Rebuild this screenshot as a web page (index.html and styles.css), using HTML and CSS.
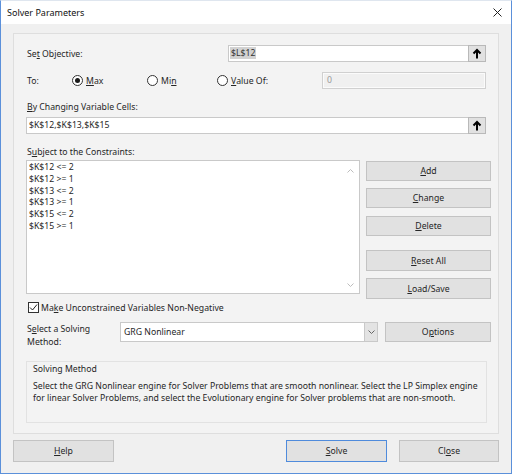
FILE: index.html
```html
<!DOCTYPE html>
<html lang="en">

<head>
  <meta charset="UTF-8" />
  <meta name="viewport" content="width=device-width, initial-scale=1.0" />
  <title>Solver Parameters</title>
  <link rel="stylesheet" href="styles.css">
</head>

<body>
  <div class="window">
    <div class="titlebar">
      <span class="caption">Solver Parameters</span>
      <svg class="close" width="9" height="9" viewBox="0 0 9 9">
        <path d="M0.5 0.5L8.5 8.5M8.5 0.5L0.5 8.5" stroke="#222" stroke-width="1" />
      </svg>
    </div>

    <div class="content">
      <div class="panel">
        <div class="objective">
          <span class="label">Se<u>t</u> Objective:</span>
          <div class="field">
            <span class="value"><span class="selected">$L$12</span></span>
            <span class="pick">
              <svg width="10" height="11" viewBox="0 0 10 11">
                <path d="M5 10.5V2M1.5 5.5L5 2L8.5 5.5" stroke="#000" stroke-width="2" fill="none" />
              </svg>
            </span>
          </div>
        </div>

        <div class="to-row">
          <span class="label">To:</span>
          <span class="radio"><i class="dot checked"></i><u>M</u>ax</span>
          <span class="radio"><i class="dot"></i>Mi<u>n</u></span>
          <span class="radio"><i class="dot"></i><u>V</u>alue Of:</span>
          <div class="field disabled"><span class="value">0</span></div>
        </div>

        <div class="caption-label"><u>B</u>y Changing Variable Cells:</div>
        <div class="field wide">
          <span class="value">$K$12,$K$13,$K$15</span>
          <span class="pick">
            <svg width="10" height="11" viewBox="0 0 10 11">
              <path d="M5 10.5V2M1.5 5.5L5 2L8.5 5.5" stroke="#000" stroke-width="2" fill="none" />
            </svg>
          </span>
        </div>

        <div class="caption-label">S<u>u</u>bject to the Constraints:</div>
        <div class="constraints">
          <div class="listbox">
            <div class="items">
              <div>$K$12 &lt;= 2</div>
              <div>$K$12 &gt;= 1</div>
              <div>$K$13 &lt;= 2</div>
              <div>$K$13 &gt;= 1</div>
              <div>$K$15 &lt;= 2</div>
              <div>$K$15 &gt;= 1</div>
            </div>
            <div class="scroll">
              <svg width="7" height="4" viewBox="0 0 7 4"><path d="M0.5 3.5L3.5 0.5L6.5 3.5" stroke="#bdbdbd" fill="none" /></svg>
              <svg width="7" height="4" viewBox="0 0 7 4"><path d="M0.5 0.5L3.5 3.5L6.5 0.5" stroke="#bdbdbd" fill="none" /></svg>
            </div>
          </div>
          <div class="side">
            <div class="btn add"><u>A</u>dd</div>
            <div class="btn change"><u>C</u>hange</div>
            <div class="btn delete"><u>D</u>elete</div>
            <div class="btn reset"><u>R</u>eset All</div>
            <div class="btn load"><u>L</u>oad/Save</div>
          </div>
        </div>

        <div class="check-row">
          <span class="checkbox">
            <svg width="9" height="9" viewBox="0 0 9 9"><path d="M1 4.5L3.5 7L8 1.5" stroke="#222" fill="none" /></svg>
          </span>
          <span>Ma<u>k</u>e Unconstrained Variables Non-Negative</span>
        </div>

        <div class="method-row">
          <span class="method-label">S<u>e</u>lect a Solving<br>Method:</span>
          <div class="dropdown">
            <span class="value">GRG Nonlinear</span>
            <span class="drop">
              <svg width="7" height="4" viewBox="0 0 7 4"><path d="M0.5 0.5L3.5 3.5L6.5 0.5" stroke="#666" fill="none" /></svg>
            </span>
          </div>
          <div class="btn options">O<u>p</u>tions</div>
        </div>

        <div class="group">
          <div class="group-title">Solving Method</div>
          <p class="desc">Select the GRG Nonlinear engine for Solver Problems that are smooth nonlinear. Select the LP Simplex engine for linear Solver Problems, and select the Evolutionary engine for Solver problems that are non-smooth.</p>
        </div>
      </div>

      <div class="footer">
        <div class="btn"><u>H</u>elp</div>
        <div class="spacer"></div>
        <div class="btn default"><u>S</u>olve</div>
        <div class="btn close-btn">Cl<u>o</u>se</div>
      </div>
    </div>
  </div>
</body>

</html>
```

FILE: styles.css
```css
* {
  box-sizing: border-box;
}

body {
  margin: 0;
  font-family: "Noto Sans", sans-serif;
  font-size: 8.7px;
  color: #262626;
  background: #fff;
}

u {
  text-decoration-thickness: 0.5px;
  text-underline-offset: 1px;
}

.window {
  width: 512px;
  height: 474px;
  border: 1px solid #5b90da;
  border-top-color: #dfe6ef;
  background: #f0f0f0;
  display: flex;
  flex-direction: column;
}

.titlebar {
  height: 23px;
  flex: none;
  background: #fff;
  display: flex;
  align-items: center;
  justify-content: space-between;
  padding: 0 9px 0 6px;
}

.titlebar .caption {
  font-size: 9px;
  color: #111;
}

.content {
  padding: 9px 12px 0 12px;
}

.panel {
  height: 401px;
  border: 1px solid #dedede;
  background: #f3f3f3;
  padding: 11px 6px 0 12px;
}

.label {
  padding-left: 1px;
}

/* text fields */
.field {
  height: 17px;
  display: flex;
  align-items: stretch;
  background: #fff;
  border: 1px solid #c9c9c9;
}

.field .value {
  flex: 1;
  line-height: 15px;
  padding-left: 1px;
}

.field .selected {
  background: #d2d2d2;
  padding: 0 1px;
  color: #333;
}

.field .pick {
  width: 18px;
  margin: -1px -1px -1px 0;
  background: #e1e1e1;
  border: 1px solid #b9b9b9;
  display: flex;
  align-items: center;
  justify-content: center;
}

.field.disabled {
  background: #f0f0f0;
  border-color: #d0d0d0;
  box-shadow: inset 0 0 0 1px #fbfbfb;
  color: #9a9a9a;
}

.field.disabled .value {
  padding-left: 4px;
}

.field.wide {
  width: 460px;
  margin-top: 4px;
}

.field.wide .value {
  padding-left: 2px;
}

.objective {
  display: grid;
  grid-template-columns: 202px 258px;
  align-items: center;
}

.to-row {
  margin-top: 10px;
  display: grid;
  grid-template-columns: 46px 75px 70px 105px 164px;
  align-items: center;
}

.radio {
  display: flex;
  align-items: center;
}

.dot {
  width: 11px;
  height: 11px;
  border: 1px solid #333;
  border-radius: 50%;
  background: #fff;
  margin-right: 3px;
  display: flex;
  align-items: center;
  justify-content: center;
}

.dot.checked::after {
  content: '';
  width: 5px;
  height: 5px;
  border-radius: 50%;
  background: #1a1a1a;
}

.caption-label {
  margin-top: 12px;
  line-height: 12px;
  padding-left: 1px;
}

/* constraints */
.constraints {
  margin-top: 2px;
  display: flex;
  align-items: flex-start;
}

.listbox {
  width: 334px;
  height: 134px;
  background: #fff;
  border: 1px solid #c9c9c9;
  display: flex;
}

.items {
  flex: 1;
  padding: 1px 0 0 2px;
  line-height: 11.8px;
}

.scroll {
  width: 17px;
  display: flex;
  flex-direction: column;
  justify-content: space-between;
  align-items: center;
  padding: 8px 0 6px;
}

.scroll svg {
  display: block;
}

.side {
  margin-left: 6px;
  width: 125px;
  padding-top: 1px;
  display: flex;
  flex-direction: column;
}

.btn {
  height: 20px;
  background: #e1e1e1;
  border: 1px solid #c3c3c3;
  display: flex;
  align-items: center;
  justify-content: center;
  color: #262626;
}

.side .change {
  margin-top: 7px;
}

.side .delete {
  margin-top: 8px;
}

.side .reset {
  margin-top: 14px;
  height: 21px;
}

.side .load {
  margin-top: 7px;
  height: 21px;
}

.check-row {
  margin-top: 3px;
  display: flex;
  align-items: center;
  height: 11px;
}

.checkbox {
  width: 11px;
  height: 11px;
  margin: 0 2px 0 2px;
  border: 1px solid #333;
  background: #fff;
  display: flex;
  align-items: center;
  justify-content: center;
}

.method-row {
  margin-top: 9px;
  display: flex;
  align-items: flex-start;
}

.method-label {
  width: 94px;
  line-height: 13px;
  padding: 1px 0 0 1px;
}

.dropdown {
  width: 258px;
  height: 20px;
  background: #fff;
  border: 1px solid #c9c9c9;
  display: flex;
}

.dropdown .value {
  flex: 1;
  line-height: 18px;
  padding-left: 3px;
}

.dropdown .drop {
  width: 14px;
  margin: -1px -1px -1px 0;
  background: #e3e3e3;
  border: 1px solid #c9c9c9;
  display: flex;
  align-items: center;
  justify-content: center;
}

.options {
  margin-left: 7px;
  width: 106px;
}

.group {
  margin-top: 12px;
  width: 461px;
  height: 62px;
  border: 1px solid #e2e2e2;
  padding: 1px 6px 0;
}

.group-title {
  line-height: 12px;
}

.desc {
  margin: 6px 0 0;
  line-height: 11.5px;
}

/* bottom buttons */
.footer {
  margin-top: 6px;
  display: flex;
}

.footer .btn {
  width: 101px;
  height: 22px;
}

.footer .spacer {
  flex: 1;
}

.footer .default {
  border-color: #4f8bdc;
  margin-right: 12px;
}

.footer .close-btn {
  width: 100px;
}
```
